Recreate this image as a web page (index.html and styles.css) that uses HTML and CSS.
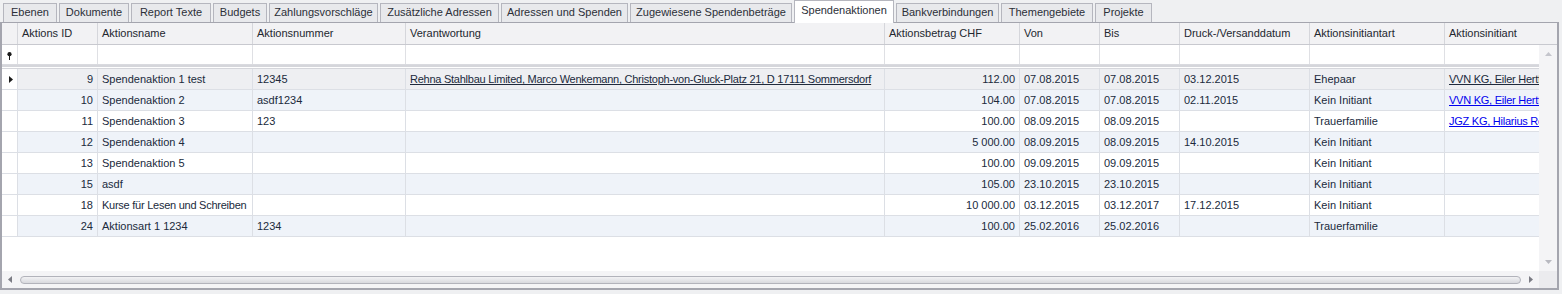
FILE: index.html
```html
<!DOCTYPE html>
<html>
<head>
<meta charset="utf-8">
<link rel="stylesheet" href="styles.css">
</head>
<body>
<div class="tabs">
  <div class="tab">Ebenen</div>
  <div class="tab">Dokumente</div>
  <div class="tab">Report Texte</div>
  <div class="tab">Budgets</div>
  <div class="tab">Zahlungsvorschläge</div>
  <div class="tab">Zusätzliche Adressen</div>
  <div class="tab">Adressen und Spenden</div>
  <div class="tab">Zugewiesene Spendenbeträge</div>
  <div class="tab active">Spendenaktionen</div>
  <div class="tab">Bankverbindungen</div>
  <div class="tab">Themengebiete</div>
  <div class="tab">Projekte</div>
</div>
<div class="grid">
  <div class="header cols">
    <div class="hcell"></div>
    <div class="hcell">Aktions ID</div>
    <div class="hcell">Aktionsname</div>
    <div class="hcell">Aktionsnummer</div>
    <div class="hcell">Verantwortung</div>
    <div class="hcell">Aktionsbetrag CHF</div>
    <div class="hcell">Von</div>
    <div class="hcell">Bis</div>
    <div class="hcell">Druck-/Versanddatum</div>
    <div class="hcell">Aktionsinitiantart</div>
    <div class="hcell last">Aktionsinitiant</div>
  </div>
  <div class="main">
    <div class="view">
      <div class="filter cols">
        <div class="cell pin"><svg width="5" height="8" viewBox="0 0 5 8"><circle cx="2.5" cy="2.2" r="2.1" fill="#1a1a1a"/><rect x="2" y="3.5" width="1" height="4.5" fill="#1a1a1a"/></svg></div>
        <div class="cell"></div><div class="cell"></div><div class="cell"></div><div class="cell"></div><div class="cell"></div><div class="cell"></div><div class="cell"></div><div class="cell"></div><div class="cell"></div><div class="cell"></div>
      </div>
      <div class="sep"></div>
      <div class="row focus cols">
        <div class="cell ind"><svg width="4" height="7" viewBox="0 0 4 7"><polygon points="0,0 4,3.5 0,7" fill="#1a1a1a"/></svg></div>
        <div class="cell num">9</div>
        <div class="cell">Spendenaktion 1 test</div>
        <div class="cell">12345</div>
        <div class="cell tight"><span class="lnk dark">Rehna Stahlbau Limited, Marco Wenkemann, Christoph-von-Gluck-Platz 21, D 17111 Sommersdorf</span></div>
        <div class="cell num">112.00</div>
        <div class="cell">07.08.2015</div>
        <div class="cell">07.08.2015</div>
        <div class="cell">03.12.2015</div>
        <div class="cell">Ehepaar</div>
        <div class="cell tight"><span class="lnk dark">VVN KG, Eiler Hertfelder</span></div>
      </div>
      <div class="row alt cols">
        <div class="cell ind"></div>
        <div class="cell num">10</div>
        <div class="cell">Spendenaktion 2</div>
        <div class="cell">asdf1234</div>
        <div class="cell"></div>
        <div class="cell num">104.00</div>
        <div class="cell">07.08.2015</div>
        <div class="cell">07.08.2015</div>
        <div class="cell">02.11.2015</div>
        <div class="cell">Kein Initiant</div>
        <div class="cell tight"><span class="lnk">VVN KG, Eiler Hertfelder</span></div>
      </div>
      <div class="row cols">
        <div class="cell ind"></div>
        <div class="cell num">11</div>
        <div class="cell">Spendenaktion 3</div>
        <div class="cell">123</div>
        <div class="cell"></div>
        <div class="cell num">100.00</div>
        <div class="cell">08.09.2015</div>
        <div class="cell">08.09.2015</div>
        <div class="cell"></div>
        <div class="cell">Trauerfamilie</div>
        <div class="cell tight"><span class="lnk">JGZ KG, Hilarius Rohde</span></div>
      </div>
      <div class="row alt cols">
        <div class="cell ind"></div>
        <div class="cell num">12</div>
        <div class="cell">Spendenaktion 4</div>
        <div class="cell"></div>
        <div class="cell"></div>
        <div class="cell num">5 000.00</div>
        <div class="cell">08.09.2015</div>
        <div class="cell">08.09.2015</div>
        <div class="cell">14.10.2015</div>
        <div class="cell">Kein Initiant</div>
        <div class="cell"></div>
      </div>
      <div class="row cols">
        <div class="cell ind"></div>
        <div class="cell num">13</div>
        <div class="cell">Spendenaktion 5</div>
        <div class="cell"></div>
        <div class="cell"></div>
        <div class="cell num">100.00</div>
        <div class="cell">09.09.2015</div>
        <div class="cell">09.09.2015</div>
        <div class="cell"></div>
        <div class="cell">Kein Initiant</div>
        <div class="cell"></div>
      </div>
      <div class="row alt cols">
        <div class="cell ind"></div>
        <div class="cell num">15</div>
        <div class="cell">asdf</div>
        <div class="cell"></div>
        <div class="cell"></div>
        <div class="cell num">105.00</div>
        <div class="cell">23.10.2015</div>
        <div class="cell">23.10.2015</div>
        <div class="cell"></div>
        <div class="cell">Kein Initiant</div>
        <div class="cell"></div>
      </div>
      <div class="row cols">
        <div class="cell ind"></div>
        <div class="cell num">18</div>
        <div class="cell tight">Kurse für Lesen und Schreiben</div>
        <div class="cell"></div>
        <div class="cell"></div>
        <div class="cell num">10 000.00</div>
        <div class="cell">03.12.2015</div>
        <div class="cell">03.12.2017</div>
        <div class="cell">17.12.2015</div>
        <div class="cell">Kein Initiant</div>
        <div class="cell"></div>
      </div>
      <div class="row alt cols">
        <div class="cell ind"></div>
        <div class="cell num">24</div>
        <div class="cell">Aktionsart 1 1234</div>
        <div class="cell">1234</div>
        <div class="cell"></div>
        <div class="cell num">100.00</div>
        <div class="cell">25.02.2016</div>
        <div class="cell">25.02.2016</div>
        <div class="cell"></div>
        <div class="cell">Trauerfamilie</div>
        <div class="cell"></div>
      </div>
    </div>
    <div class="vscroll">
      <svg width="7" height="4" viewBox="0 0 7 4"><polygon points="0,4 3.5,0 7,4" fill="#c4c5cc"/></svg>
      <svg width="7" height="4" viewBox="0 0 7 4"><polygon points="0,0 3.5,4 7,0" fill="#b8b9c0"/></svg>
    </div>
  </div>
  <div class="hscroll">
    <div class="htrack">
      <svg width="4" height="7" viewBox="0 0 4 7"><polygon points="4,0 0,3.5 4,7" fill="#7b7c84"/></svg>
      <div class="thumb"></div>
      <svg width="4" height="7" viewBox="0 0 4 7"><polygon points="0,0 4,3.5 0,7" fill="#7b7c84"/></svg>
    </div>
    <div class="corner"></div>
  </div>
</div>
</body>
</html>
```
FILE: styles.css
```css
* { box-sizing: border-box; }
body {
  margin: 0;
  width: 1562px;
  height: 294px;
  overflow: hidden;
  background: #eff0f2;
  font: 11px "Liberation Sans", Arial, sans-serif;
  color: #202a3c;
}
.tabs {
  display: grid;
  grid-template-columns: 54px 70px 80px 54px 109px 119px 127px 162px 100px 103px 92px 57px;
  column-gap: 2px;
  padding-left: 3px;
  height: 22px;
  align-items: end;
  position: relative;
  z-index: 2;
}
.tab {
  height: 19px;
  border: 1px solid #b5b6be;
  border-bottom: none;
  background: #e8e9ec;
  text-align: center;
  line-height: 17px;
  color: #2b2f38;
  white-space: nowrap;
}
.tab.active {
  height: 23px;
  margin-bottom: -1px;
  background: #ffffff;
  line-height: 19px;
}
.grid {
  width: 1559px;
  height: 268px;
  border: 2px solid #a4a5ae;
  border-top: 1px solid #a4a5ae;
  background: #ffffff;
  display: flex;
  flex-direction: column;
  position: relative;
  z-index: 1;
}
.cols {
  display: grid;
  grid-template-columns: 16px 80px 155px 153px 479px 135px 80px 80px 130px 135px 140px;
}
.header {
  height: 22px;
  flex: none;
  background: #f2f2f4;
  border-bottom: 1px solid #c8c9cf;
  grid-template-columns: 16px 80px 155px 153px 479px 135px 80px 80px 130px 135px 1fr;
  overflow: hidden;
}
.hcell {
  border-right: 1px solid #d5d6db;
  padding-left: 4px;
  line-height: 21px;
  white-space: nowrap;
  overflow: hidden;
  color: #23272f;
}
.hcell.last { border-right: none; }
.main {
  height: 226px;
  flex: none;
  display: flex;
}
.view {
  flex: 1;
  min-width: 0;
  overflow: hidden;
  background: #ffffff;
}
.vscroll {
  width: 18px;
  flex: none;
  background: #f4f4f6;
  display: flex;
  flex-direction: column;
  justify-content: space-between;
  align-items: center;
  padding: 7px 0 7px 0;
}
.filter {
  height: 20px;
  border-bottom: 1px solid #d9dadf;
}
.filter .cell { border-right-color: #dfe0e4; }
.cell.pin {
  display: flex;
  align-items: center;
  padding: 2px 0 0 5px;
}
.sep {
  height: 4px;
  border-top: 2px solid #d5d6db;
  border-bottom: 1px solid #d5d6db;
}
.row {
  height: 21px;
  border-bottom: 1px solid #dcdfe5;
  line-height: 20px;
}
.cell {
  border-right: 1px solid #dcdfe5;
  padding: 0 4px;
  white-space: nowrap;
  overflow: hidden;
}
.cell.tight { letter-spacing: -0.25px; }
.cell.ind {
  background: #ffffff;
  padding: 0 0 0 7px;
  display: flex;
  align-items: center;
}
.num { text-align: right; }
.row.alt .cell:not(.ind) { background: #eff3f9; }
.row.focus .cell:not(.ind) { background: #eeeff2; }
.lnk {
  color: #0000ee;
  text-decoration: underline;
}
.lnk.dark { color: #202a3c; }
.hscroll {
  height: 17px;
  flex: none;
  display: flex;
}
.htrack {
  flex: 1;
  display: flex;
  align-items: center;
  padding: 0 6px;
  background: #f4f4f6;
}
.thumb {
  flex: 1;
  height: 8px;
  margin: 0 8px;
  border: 1px solid #b2b3bb;
  border-radius: 4px;
  background: linear-gradient(#f2f2f4, #d8d9de);
}
.corner {
  width: 18px;
  background: #ebebee;
}
```
